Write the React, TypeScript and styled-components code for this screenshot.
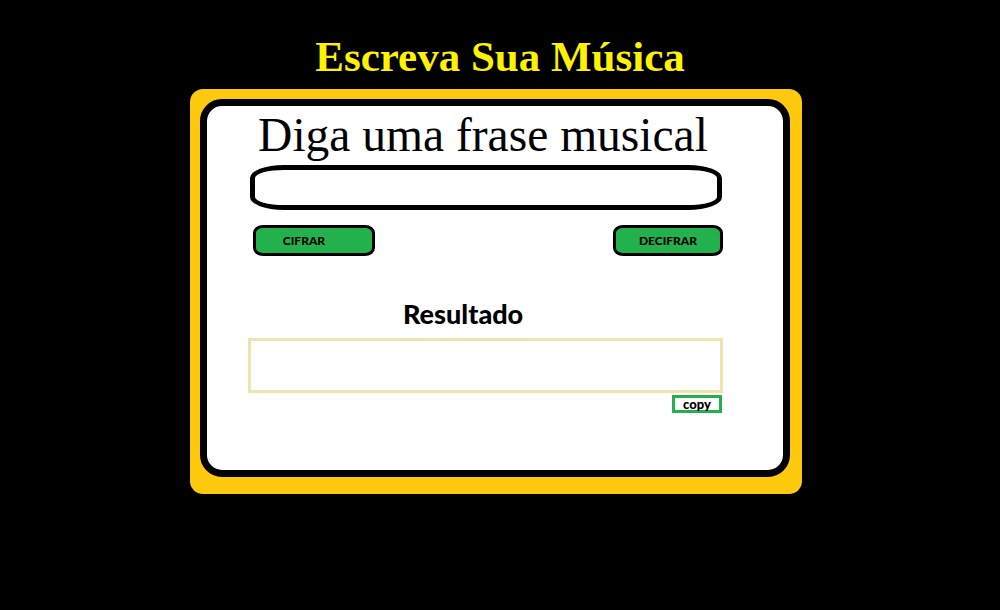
import styled, { createGlobalStyle } from "styled-components";

const GlobalStyle = createGlobalStyle`
  html, body {
    margin: 0;
    padding: 0;
    background: #000;
  }
  * {
    box-sizing: border-box;
  }
`;

const Page = styled.div`
  width: 1000px;
  height: 610px;
  background: #000;
  padding-top: 26px;
`;

const Title = styled.h1`
  margin: 0;
  height: 63px;
  text-align: center;
  color: #fff200;
  font-family: "Liberation Serif", serif;
  font-weight: 700;
  font-size: 43px;
  line-height: 62px;
`;

const Frame = styled.div`
  width: 612px;
  height: 405px;
  margin-left: 190px;
  background: #ffc90e;
  border-radius: 13px;
  padding: 10px 12px 17px 10px;
`;

const Card = styled.div`
  height: 100%;
  background: #fff;
  border: 7px solid #000;
  border-radius: 22px;
  padding-left: 41px;
`;

const Column = styled.div`
  width: 475px;
`;

const Heading = styled.h2`
  margin: 0;
  height: 59px;
  text-align: center;
  font-family: "Liberation Serif", "Times New Roman", serif;
  font-weight: 400;
  font-size: 47.5px;
  line-height: 58px;
  color: #000;
  padding-right: 5px;
`;

const PhraseInput = styled.input`
  display: block;
  margin-left: 2px;
  width: 472px;
  height: 45px;
  border: 5px solid #000;
  border-radius: 34px / 13px;
  background: #fff;
  outline: none;
  font-size: 18px;
  padding: 0 16px;
`;

const ButtonRow = styled.div`
  display: flex;
  justify-content: space-between;
  margin-top: 15px;
  padding-left: 5px;
`;

const ActionButton = styled.button<{ $w: number; $shift?: number }>`
  width: ${(p) => p.$w}px;
  height: 31px;
  background: #22b14c;
  border: 3px solid #000;
  border-radius: 10px / 8px;
  padding: 0 ${(p) => p.$shift ?? 0}px 0 0;
  font-family: "Comic Sans MS", "Lato", sans-serif;
  font-weight: 900;
  font-size: 12px;
  color: #000;
  cursor: pointer;
`;

const ResultLabel = styled.div`
  margin-top: 43px;
  padding-left: 155px;
  height: 39px;
  font-family: "Comic Sans MS", "Lato", sans-serif;
  font-weight: 900;
  font-size: 27px;
  line-height: 30px;
  color: #000;
`;

const ResultBox = styled.div`
  width: 475px;
  height: 55px;
  border: 3px solid #efe4b0;
  background: #fff;
`;

const CopyRow = styled.div`
  display: flex;
  justify-content: flex-end;
  padding-right: 1px;
  margin-top: 2px;
`;

const CopyButton = styled.button`
  width: 50px;
  height: 18px;
  border: 3px solid #22b14c;
  background: #fff;
  padding: 0;
  font-family: "Comic Sans MS", "Lato", sans-serif;
  font-weight: 900;
  font-size: 13px;
  line-height: 11px;
  color: #000;
  cursor: pointer;
`;

export default function App() {
  return (
    <Page>
      <GlobalStyle />
      <Title>Escreva Sua Música</Title>
      <Frame>
        <Card>
          <Column>
            <Heading>Diga uma frase musical</Heading>
            <PhraseInput type="text" />
            <ButtonRow>
              <ActionButton $w={122} $shift={20}>CIFRAR</ActionButton>
              <ActionButton $w={110}>DECIFRAR</ActionButton>
            </ButtonRow>
            <ResultLabel>Resultado</ResultLabel>
            <ResultBox />
            <CopyRow>
              <CopyButton>copy</CopyButton>
            </CopyRow>
          </Column>
        </Card>
      </Frame>
    </Page>
  );
}
